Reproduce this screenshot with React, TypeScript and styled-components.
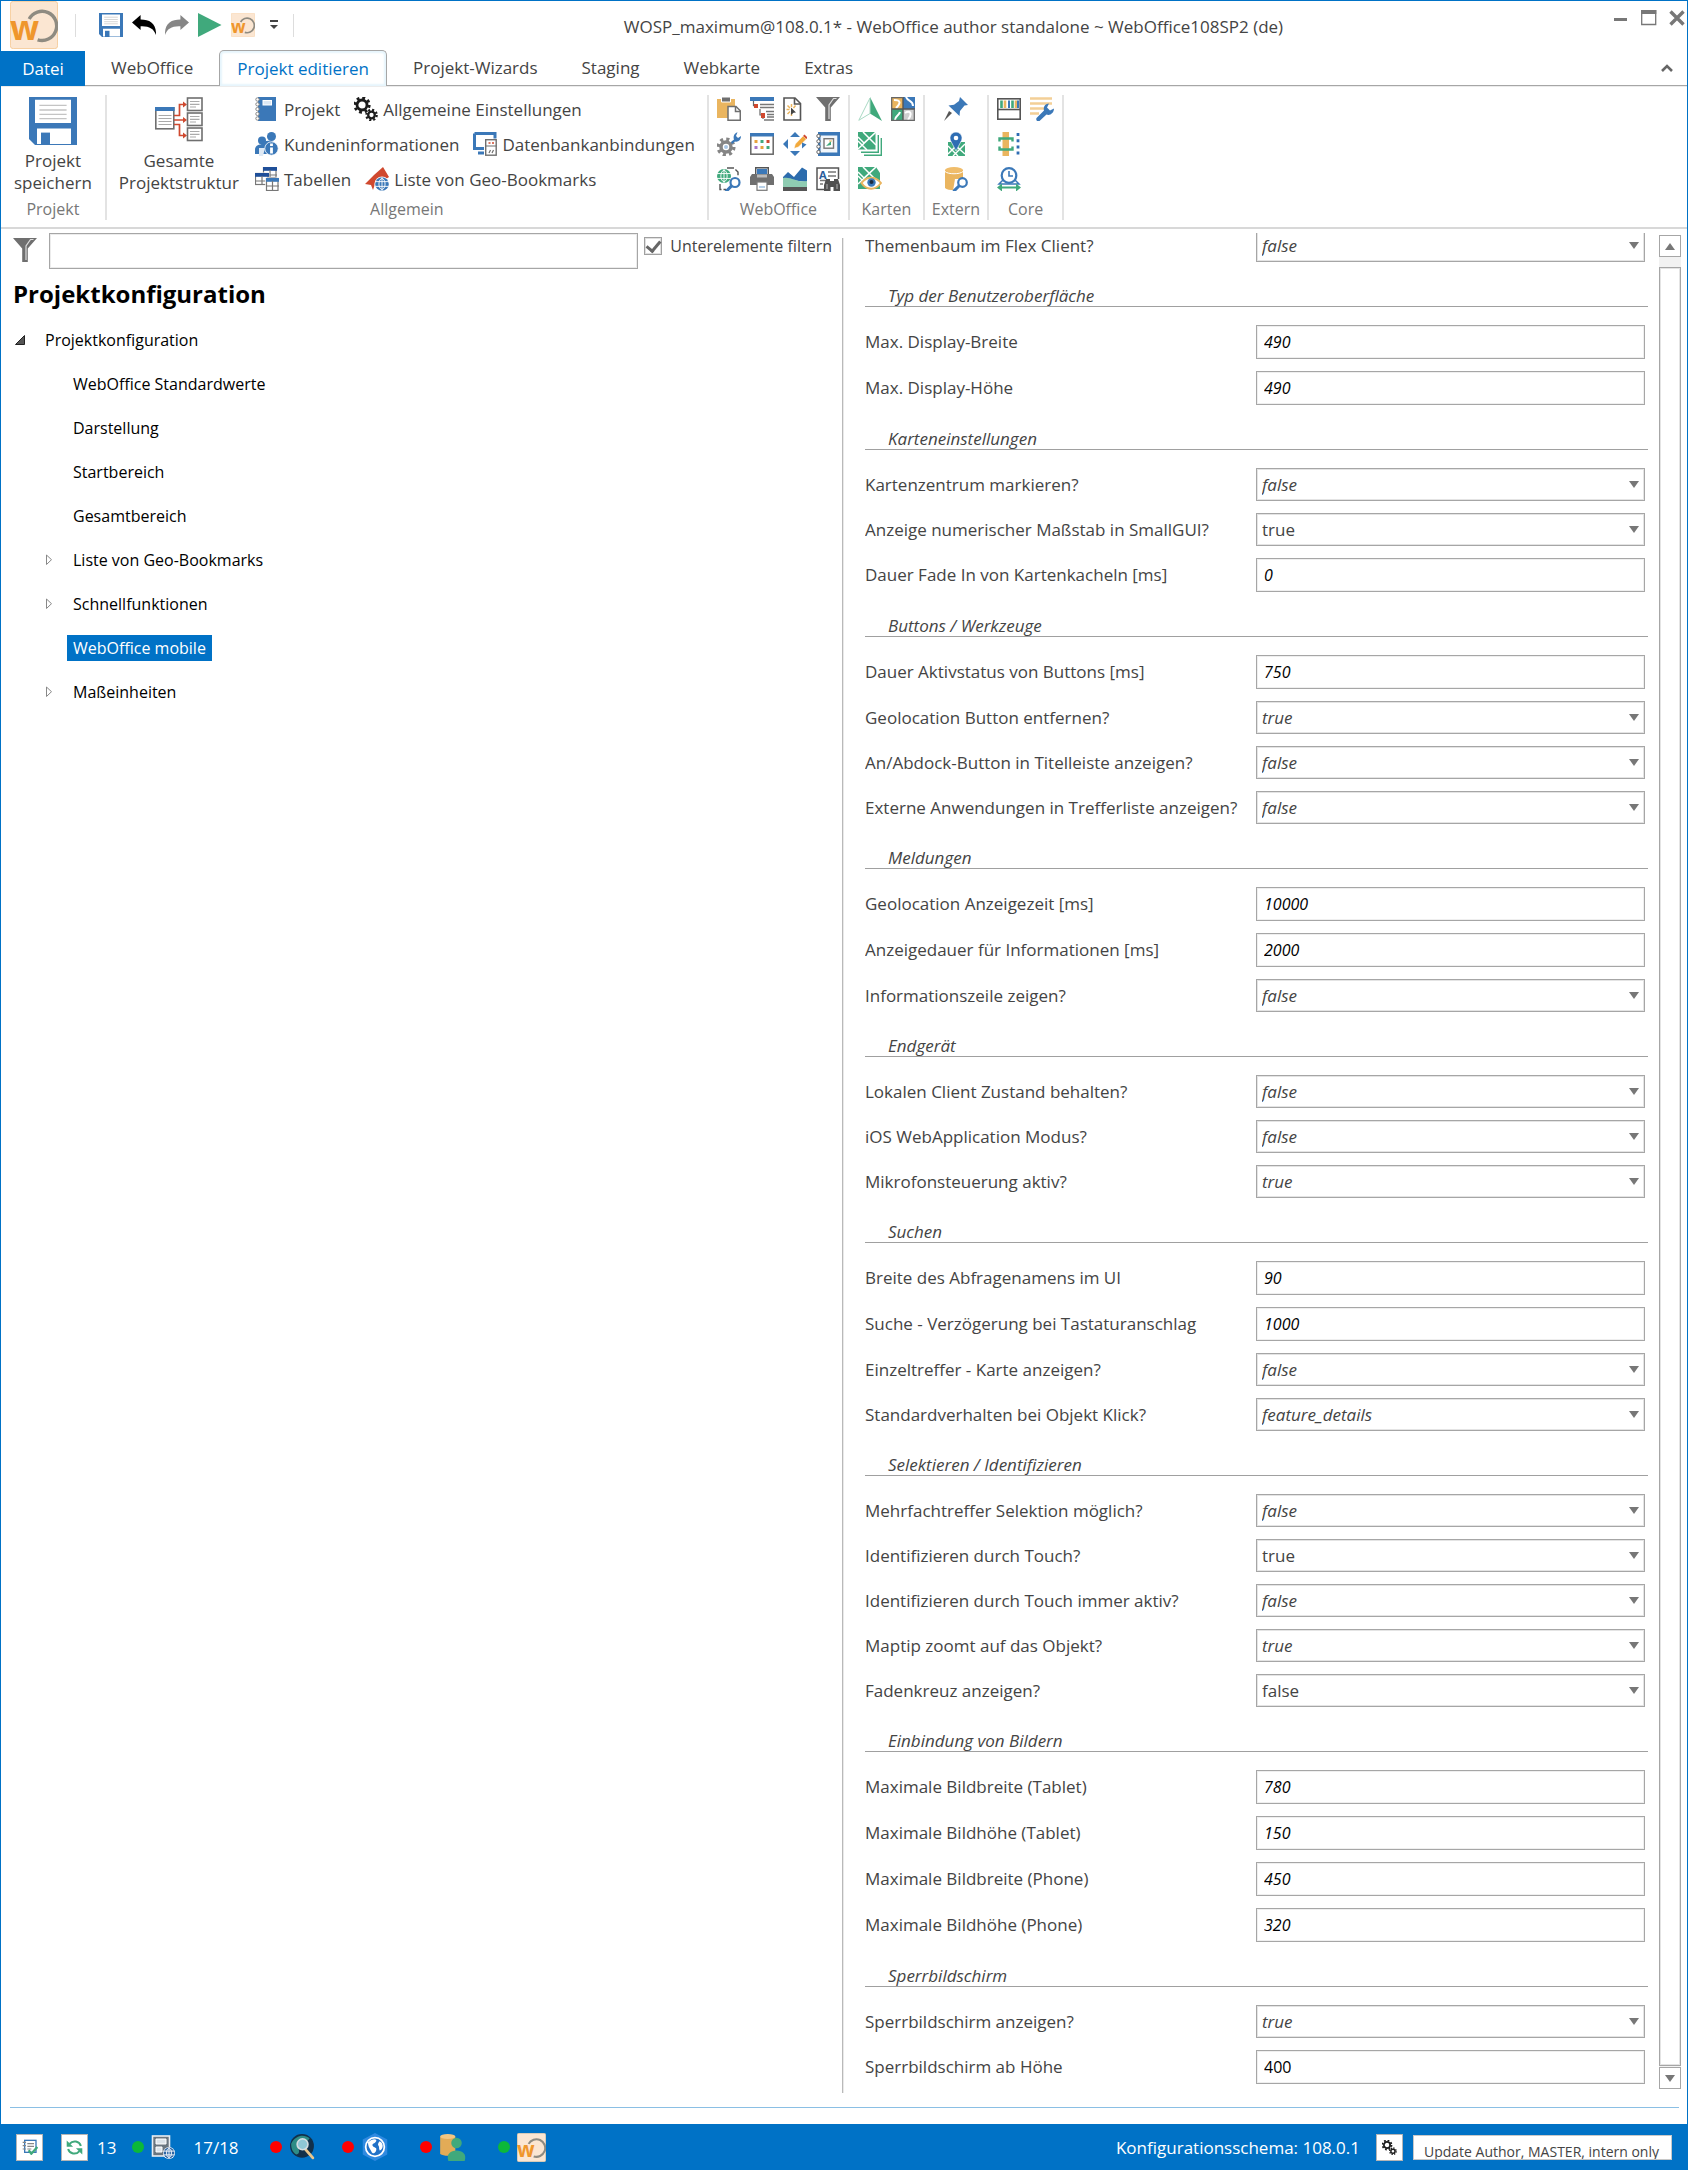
import React, { useState } from 'react';
import styled, { createGlobalStyle, css } from 'styled-components';

const BLUE = '#0072c6';
const IB = '#3b78b8';
const IG = '#6f6f6f';
const GREEN = '#40a97c';
const AMBER = '#eab55f';
const RED = '#d0492f';

const Global = createGlobalStyle`
  * { box-sizing: border-box; }
  body { margin: 0; background: #fff; }
  body, button, input, select {
    font-family: "Open Sans", "Noto Sans", sans-serif;
    font-size: 17px;
    color: #444;
  }
  button { border: 0; padding: 0; background: none; cursor: pointer; }
  svg { display: block; flex: none; }
`;

/* ---------- icons ---------- */

type IconProps = { size?: number };
const Svg = ({ size = 24, children }: IconProps & { children: React.ReactNode }) => (
  <svg width={size} height={size} viewBox="0 0 24 24" fill="none" aria-hidden="true">{children}</svg>
);

const Gear = ({ x, y, r, c, w = 2 }: { x: number; y: number; r: number; c: string; w?: number }) => {
  const tooth = (2 * Math.PI * (r + w * 0.8)) / 16;
  return (
    <>
      <circle cx={x} cy={y} r={r} stroke={c} strokeWidth={w} />
      <circle cx={x} cy={y} r={r + w * 0.8} stroke={c} strokeWidth={w} strokeDasharray={`${tooth} ${tooth}`} />
    </>
  );
};

const Lens = ({ x, y, r = 3.5, c = IB }: { x: number; y: number; r?: number; c?: string }) => (
  <>
    <path d={`M${x - r * 0.7} ${y + r * 0.7}L${x - r * 1.9} ${y + r * 1.9}`} stroke={c} strokeWidth="3" strokeLinecap="round" />
    <circle cx={x} cy={y} r={r} fill="#fff" stroke={c} strokeWidth="2.2" />
  </>
);

const Globe = ({ x, y, r, c }: { x: number; y: number; r: number; c: string }) => (
  <>
    <circle cx={x} cy={y} r={r} fill={c} />
    <ellipse cx={x} cy={y} rx={r * 0.45} ry={r * 0.8} stroke="#fff" strokeWidth=".9" />
    <path d={`M${x - r} ${y - r * 0.35}h${2 * r}M${x - r} ${y + r * 0.35}h${2 * r}M${x} ${y - r}v${2 * r}`} stroke="#fff" strokeWidth=".9" />
  </>
);

const LogoIcon = ({ size }: IconProps) => (
  <Svg size={size}>
    <rect x=".2" y=".2" width="23.6" height="23.6" rx="1.4" fill="#fbe6d2" stroke="#f6cd9d" strokeWidth=".5" />
    <path d="M9.600 9a7.300 7.300 0 1 1 4.200 10.400" stroke="#8f8b81" strokeWidth="1.700" />
    <text x="0" y="19.600" fontFamily="Open Sans, sans-serif" fontWeight="700" fontSize="17" fill="#ef962c">w</text>
  </Svg>
);
const SaveIcon = ({ size }: IconProps) => (
  <Svg size={size}>
    <path d="M0 0h24v24H3l-3-3z" fill={IB} />
    <path d="M3 1.4h18V13H3zM4 15.7h17v7.8H4z" fill="#fff" />
    <path d="M5.2 4.2h13.6M5.2 6.5h13.6M5.2 8.7h13.6M5.2 10.8h13.6" stroke="#c4c4c4" strokeWidth=".7" />
    <path d="M6 17.8h4.5V24H6z" fill={IB} />
  </Svg>
);
const UndoIcon = () => (
  <Svg><path d="M0 9.5 8.6 2v4.5C18 6.500 24.500 10.500 24 22 21.800 15.500 17 12.800 8.600 13.200V17z" fill="#000" /></Svg>
);
const RedoIcon = () => (
  <Svg><path d="M24 9.500 15.400 2v4.500C6 6.500-.5 10.500 0 22 2.200 15.500 7 12.800 15.400 13.200V17z" fill="#868686" /></Svg>
);
const PlayIcon = () => <Svg><path d="M0 0 23.500 12 0 24z" fill={GREEN} /></Svg>;

const StructureIcon = () => (
  <svg width="48" height="48" viewBox="0 0 48 48" fill="none" aria-hidden="true">
    <rect x=".8" y="10.800" width="18" height="21" fill="#fff" stroke={IG} strokeWidth="1.600" />
    <path d="M0 10h19.600v4H0z" fill={IB} />
    <path d="M3.500 18.500h13M3.500 21.500h13M3.500 24.500h13M3.500 27.500h13" stroke="#aaa" strokeWidth="1.200" />
    <path d="M19 18.500h5.500V7.500H30M19 23H30M19 27.500h5.500v11H30" stroke={RED} strokeWidth="1.700" />
    <path d="m28 4.500 4 3-4 3zM28 20l4 3-4 3zM28 35.500l4 3-4 3z" fill={RED} />
    {[1, 16, 31].map((y) => (
      <g key={y}>
        <rect x="32.500" y={y} width="14.500" height="12.500" fill="#fff" stroke={IG} strokeWidth="1.600" />
        <path d={`M35 ${y + 3.500}h9.500M35 ${y + 6.300}h9.500M35 ${y + 9}h6`} stroke="#aaa" strokeWidth="1.200" />
      </g>
    ))}
  </svg>
);
const NotebookIcon = () => (
  <Svg>
    <path d="M3 0h18v24H3z" fill={IB} /><path d="M7.500 3h9.500v5.500H7.500z" fill="#fff" /><path d="M8.500 4h7.500v3.500H8.500z" fill="#dce8f4" />
    {[2.500, 7.300, 12.100, 16.900, 21.500].map((y) => <circle key={y} cx="2.500" cy={y} r="1.700" fill="#fff" stroke="#888" strokeWidth="1" />)}
  </Svg>
);
const GearsIcon = ({ size }: IconProps) => (
  <Svg size={size}><Gear x={8} y={8} r={5} c="#1c1c1c" w={2.800} /><Gear x={17.500} y={18} r={3.300} c="#1c1c1c" w={2.300} /></Svg>
);
const PeopleIcon = () => (
  <Svg>
    <circle cx="16.500" cy="4.500" r="4.500" fill={IB} /><circle cx="7" cy="8.500" r="4" fill={IB} />
    <path d="M0 24v-6c0-4 3-5.500 6-5.500 2-4 12-6 15.500.5V18L11 22H0z" fill={IB} />
    <path d="M4 16v8h4l2-8z" fill="#dfe9f4" />
    <circle cx="16.500" cy="16.500" r="6.700" fill={IB} stroke="#fff" strokeWidth=".8" />
    <path d="M16.500 11.500v2.600M16.500 15.500v6" stroke="#fff" strokeWidth="2.800" />
  </Svg>
);
const TablesIcon = () => (
  <Svg>
    {[[8, 0, 14, 11], [0, 6, 14, 12], [11, 11, 13, 13]].map(([x, y, w, h], i) => (
      <g key={i}>
        <rect x={x - 0.800} y={y - 0.500} width={w + 1} height={h + 1} fill="#fff" />
        <rect x={x + 0.500} y={y + 0.500} width={w - 1.500} height={h - 1} stroke="#777" strokeWidth="1.200" />
        <path d={`M${x} ${y}h${w}v3.800h-${w}z`} fill={i === 2 ? IB : '#1f4f99'} />
        <path d={`M${x + w / 2} ${y + 3}v${h - 3}M${x} ${y + 8}h${w}`} stroke="#777" strokeWidth="1.200" />
      </g>
    ))}
  </Svg>
);
const DatabaseConnIcon = () => (
  <Svg>
    <path d="M1.500 1.500h20.500v5M11 16.500H1.500v-15M5 21h6" stroke={IB} strokeWidth="3" />
    <rect x="12.700" y="7.700" width="10.500" height="15.500" fill="#fff" stroke={IG} strokeWidth="1.400" />
    <path d="M12.500 14h11M16 21l1.500-3M19 21l1.500-3" stroke={IG} strokeWidth="1.200" />
    <path d="M15.500 11h2M19 11h2" stroke={RED} strokeWidth="1.300" />
  </Svg>
);
const GeoBookmarkIcon = () => (
  <Svg>
    <path d="M18 0 24 10 18 14 11 14 8 23 6 18 0 17 9 8z" fill={RED} />
    <circle cx="17" cy="17" r="7.600" fill="#fff" /><Globe x={17} y={17} r={6.800} c={IB} />
  </Svg>
);
const PasteIcon = () => (
  <Svg>
    <path d="M0 2h18v19H0z" fill={AMBER} /><path d="M4.500 0h9v5h-9z" fill={IG} stroke="#fff" />
    <path d="M11 9.500h8l4.300 4.300v9.500H11z" fill="#fff" stroke={IG} strokeWidth="1.500" /><path d="M18.500 9.500v5h5" stroke={IG} strokeWidth="1.500" />
  </Svg>
);
const TreeIcon = () => (
  <Svg>
    <path d="M0 0h24v4H0z" fill={IB} /><path d="M3.500 4v5M3.500 9H7M10 12v6h3M13 18v4" stroke="#666" strokeWidth="1.200" />
    <path d="M4 7h4v4H4zM11 16h4v5h-4z" fill={RED} />
    <path d="M10 7.500h14M10 10.500h14M16 14.500h8M17 17.500h7M17 20h7M14 23h10" stroke="#777" strokeWidth="1.500" />
  </Svg>
);
const PageClickIcon = () => (
  <Svg>
    <path d="M1 1h11l5.500 5.500V23H1z" stroke="#555" strokeWidth="1.600" /><path d="M11.500 1v6h6" stroke="#555" strokeWidth="1.600" />
    <path d="M8.500 7v3M8.500 16v3M3.500 12.500h3M4.500 8.500l2.500 2.500M4.500 17l2.500-2.500M12.500 8.500 10.500 11" stroke={AMBER} strokeWidth="1.500" />
    <path d="M8 10.500l5 5-2.500.3L8 18z" fill="#444" />
  </Svg>
);
const FunnelIcon = () => (
  <Svg>
    <path d="M0 0h24L14.800 10.500V24H9.200V10.500z" fill={IG} /><path d="M20.500 1.500h-3L13 8v14" stroke="#ddd" strokeWidth="1.200" />
  </Svg>
);
const GearWrenchIcon = () => (
  <Svg>
    <Gear x={9} y={15} r={5} c="#858585" w={3.500} /><circle cx="9" cy="15" r="2" fill="#a9c6e4" />
    <path d="M14 10l3-2.500c-1-3 0-6 3.500-7.300L19 4l2 2 3-2c0 4-3 6.500-6 5.500L15 12z" fill={IB} />
  </Svg>
);
const CalendarIcon = () => (
  <Svg>
    <rect x=".8" y="1.800" width="22.400" height="20.400" stroke="#666" strokeWidth="1.500" /><path d="M0 1h24v3.500H0z" fill={IB} />
    <path d="M4.500 9.500h3" stroke="#e8a33d" strokeWidth="3" /><path d="M4.500 15.500h3" stroke="#a977c9" strokeWidth="3" />
    <path d="M10.500 9.500h3" stroke={GREEN} strokeWidth="3" /><path d="M10.500 15.500h3" stroke="#e8a33d" strokeWidth="3" />
    <path d="M16.500 9.500h3" stroke={RED} strokeWidth="3" /><path d="M16.500 15.500h3" stroke={GREEN} strokeWidth="3" />
  </Svg>
);
const MoveEditIcon = () => (
  <Svg>
    <path d="M12 0l5 5H7zM12 24l5-5H7zM0 12l5-5v10z" fill={IB} />
    <path d="M11 16.500l1.300-4.500 7.700-8 3.500 3-8 8z" fill="#f2a93b" stroke="#fff" strokeWidth=".6" /><path d="M20 4l1.500-1.500 3 3L23.500 7z" fill={RED} />
    <path d="M19 10.500l4.500 2-4.500 4z" fill={IB} />
  </Svg>
);
const AlbumIcon = () => (
  <Svg>
    <path d="M2 0h22v24H2z" fill={IB} /><path d="M4.500 3.500h16.800v17H4.500z" fill="#f1f6fb" />
    <rect x="8" y="6.700" width="9.500" height="9.500" fill="#fff" stroke="#777" strokeWidth="1.400" /><path d="M10 14l5-5v4z" fill={GREEN} /><path d="M13 9h3" stroke={AMBER} />
    {[4, 9.300, 14.600, 20].map((y) => <circle key={y} cx="2.500" cy={y} r="1.700" fill="#fff" stroke="#666" strokeWidth="1" />)}
  </Svg>
);
const WebSearchIcon = () => (
  <Svg>
    <path d="M10 1h7l4 4v5M3 17v5.500h6" stroke="#555" strokeWidth="1.400" strokeDasharray="7 2" />
    <Globe x={7} y={9} r={7} c={GREEN} /><Lens x={18} y={15.500} r={4.500} />
  </Svg>
);
const PrinterIcon = () => (
  <Svg>
    <path d="M5.700.7h12.600V8H5.700z" fill="#e8f0f8" stroke="#555" strokeWidth="1.400" /><path d="M7 2h10v5H7z" fill={IB} />
    <path d="M2 7h20l2 3v8H0v-8z" fill={IG} /><rect x="7" y="15" width="10" height="8.300" fill="#fff" stroke="#777" strokeWidth="1.200" />
    <path d="M9 20h6" stroke="#9fc0e0" strokeWidth="1.500" /><path d="M7 7.500h10v3H7z" fill="#bbb" />
  </Svg>
);
const LandscapeIcon = () => (
  <Svg>
    <path d="M0 10l5-5 6 5 8-9.500 5 3V15L0 12z" fill="#2c6cad" /><path d="M0 11c8-2 14 5 24 3v6H0z" fill="#8fccb2" /><path d="M0 20h24v4H0z" fill="#555" />
  </Svg>
);
const TextSearchIcon = () => (
  <Svg>
    <path d="M8 22.500H1V1h21.500v11" stroke="#555" strokeWidth="1.500" />
    <text x="3" y="11.500" fontFamily="Open Sans, sans-serif" fontWeight="700" fontSize="11" fill="#2a5d9c">A</text>
    <path d="M12 5h8M12 9h8M4 13.500h6M4 17h3" stroke="#777" strokeWidth="1.400" />
    <path d="M10 12h4v2h4v-2h4l2 6v6h-6.500v-4h-3v4H8v-6z" fill="#505050" /><path d="M11 17v5M21 17v5" stroke="#ccc" strokeWidth=".8" />
  </Svg>
);
const NorthIcon = () => (
  <Svg><path d="M12 0l12 24-12-7.500z" fill={GREEN} /><path d="M12 1 .8 23.300 12 16.500z" stroke="#a8d9c3" strokeWidth="1" /></Svg>
);
const MapGridIcon = () => (
  <Svg>
    <path d="M0 0h12v12H0z" fill={AMBER} /><path d="M12 0h12v12H12z" fill={IB} /><path d="M0 12h12v12H0z" fill={GREEN} /><path d="M12 12h12v12H12z" fill="#cfcfcf" />
    <path d="M3 3c7 0 7 3 2 8M15 0c2 5 7 3 7 9M4 23c0-4 4-4 5-8M14 16c5-3 8 0 3 7" stroke="#fff" strokeWidth="2" />
    <path d="M12 0v24M0 12h24" stroke="#555" strokeWidth="1.400" /><path d="M.7 12V.7h11M.7 12v11.300h22.600V12" stroke="#666" strokeWidth="1.200" />
  </Svg>
);
const mapLines = 'M0 5l6 6 12-11M0 17L17 1M5 0l13 13M0 9l9 9';
const MapStackIcon = () => (
  <Svg>
    <path d="M0 0h17.500v17.500H0z" fill={GREEN} /><path d={mapLines} stroke="#fff" strokeWidth="1.500" />
    <path d="M3 20.300h17.300V3M6 23.300h17.300V6" stroke={GREEN} strokeWidth="1.400" />
  </Svg>
);
const MapEyeIcon = () => (
  <Svg>
    <path d="M0 0h18l4 6v16H0z" fill={GREEN} /><path d="M0 5l6 6 12-11M0 17L17 1M5 0l17 17M0 9l12 12" stroke="#fff" strokeWidth="1.500" />
    <path d="M3.500 16c5-7 14-7 19.500 0-5.500 7.500-14.500 7.500-19.500 0z" fill="#fff" stroke={AMBER} strokeWidth="2" />
    <circle cx="13.500" cy="15.500" r="4.200" fill={IB} /><circle cx="13.500" cy="15" r="2" fill="#1d2b3f" />
  </Svg>
);
const PinIcon = () => (
  <Svg>
    <path d="M8 16 0 24l5-10z" fill="#555" /><path d="M16 0l8 8-3.500.5L16 14l-.5 5L4.500 8.500l5.500-.7L15 4z" fill={IB} />
  </Svg>
);
const MapPinIcon = () => (
  <Svg>
    <path d="M4 10h17v14H4z" fill={GREEN} /><path d="M4 14l10 10M21 12 9 24M4 22l8-8 9 8" stroke="#fff" strokeWidth="1.400" />
    <path d="M12 19 6.500 8.500a6 6 0 1 1 11 0z" fill="#2e6db3" stroke="#fff" strokeWidth=".6" /><circle cx="12" cy="6" r="2.300" fill="#fff" />
  </Svg>
);
const DbSearchIcon = () => (
  <Svg>
    <path d="M1 3h18v18c-3 3-15 3-18 0z" fill={AMBER} /><ellipse cx="10" cy="3" rx="9" ry="3" fill="#f0bd6b" /><path d="M1 4.500c3 3 15 3 18 0" stroke="#fff" strokeWidth="1" />
    <path d="M11 12h12v12H9z" fill="#fff" /><Lens x={18.500} y={15.500} r={4.300} />
  </Svg>
);
const ShelfIcon = () => (
  <Svg>
    <rect x=".8" y="1.800" width="22.400" height="20.400" stroke="#555" strokeWidth="1.600" /><path d="M0 12.500h24" stroke="#555" strokeWidth="1.600" />
    <path d="M4.500 3.500v7.500M15.500 3.500v7.500" stroke={GREEN} strokeWidth="2.600" /><path d="M8 3.500v7.500M19 3.500v7.500" stroke={AMBER} strokeWidth="2.600" /><path d="M12 3.500v7.500M21 3.500v7.500" stroke={IB} strokeWidth="2" />
  </Svg>
);
const ListWrenchIcon = () => (
  <Svg>
    <path d="M0 1.500h22M0 6.500h22M0 11.500h16M0 16.500h9" stroke="#f3cf97" strokeWidth="2.600" />
    <path d="M6.500 21l7.500-7.500c-1-4 1-6.500 5-7l-2 4 3 3 4-2c0 4.500-4 7.500-7.500 6L9.500 24c-2 1-4-.5-3-3z" fill={IB} />
  </Svg>
);
const BracketsIcon = () => (
  <Svg>
    <path d="M5.500 0h6.500v24H5.500z" fill={AMBER} />
    <path d="M2.500 9.500V6.500h13v3M2.500 14.500v3h13v-3" stroke={GREEN} strokeWidth="2.400" />
    <path d="M21 1v22" stroke="#2e6db3" strokeWidth="2.800" strokeDasharray="3 3.200" />
  </Svg>
);
const TimeExtentIcon = () => (
  <Svg>
    <path d="M6 13l-4 4h20l-4-4" stroke={IB} strokeWidth="1.500" /><circle cx="12" cy="8.500" r="7.300" fill="#fff" stroke={IB} strokeWidth="2.200" /><path d="M12 4v5h4" stroke={IB} strokeWidth="1.600" />
    <path d="M0 20.500l5-4v3h14v-3l5 4-5 4v-3H5v3z" fill={GREEN} />
  </Svg>
);
const ChecklistIcon = () => (
  <Svg size={16}>
    <rect x="4" y="2" width="17" height="18" stroke={IB} strokeWidth="2" /><path d="M1 5h5M1 10h5M1 15h5M8 7h10M8 11h10M8 15h6" stroke="#888" strokeWidth="1.700" />
    <path d="M10 17l4 5 9-10" stroke={GREEN} strokeWidth="3.500" />
  </Svg>
);
const RefreshIcon = () => (
  <Svg size={17}>
    <path d="M21 10C19 3 10 1 5 7M3 14c2 7 11 9 16 3" stroke={GREEN} strokeWidth="2.800" /><path d="M1 2v9h9zM23 22v-9h-9z" fill={GREEN} />
  </Svg>
);
const ServerIcon = () => (
  <Svg>
    <rect x="1.500" y="1" width="17" height="20" fill="#6a7680" stroke="#e9eef2" strokeWidth="1.600" /><path d="M5 4h10v5H5zM5 12h6v5H5z" fill="#dce4ea" stroke="#fff" />
    <circle cx="18" cy="18" r="6" fill="#fff" /><Globe x={18} y={18} r={5.400} c="#2b65a5" />
  </Svg>
);
const GlobeSearchIcon = () => (
  <Svg size={26}>
    <circle cx="12" cy="11" r="11" fill="#12304a" /><path d="M2 9c4-8 12-9 17-5-3 5-6 2-9 6s2 7-3 9C3 17 2 13 2 9z" fill="#2e8c86" />
    <path d="M15 14l7 8" stroke="#e8c68c" strokeWidth="2.600" strokeLinecap="round" /><circle cx="12.500" cy="9.500" r="5" fill="#8fc7d6" stroke="#d4dde2" strokeWidth="1.500" />
  </Svg>
);
const HexGlobeIcon = () => (
  <Svg size={28}>
    <path d="M12 0l10.500 5.500v13L12 24 1.500 18.500v-13z" fill="#2f8ae0" /><circle cx="12" cy="12" r="8" fill="#2272c8" stroke="#fff" strokeWidth="1.500" />
    <path d="M6 8c4-4 8-3 7-1s-4 2-3 4 4 1 3 4-3 3-4 1-3-4-3-8zM16 7c4 2 3 7 0 8-1-2 0-3-1-4s0-3 1-4z" fill="#fff" />
  </Svg>
);
const DbUserIcon = () => (
  <Svg size={28}>
    <path d="M1 3h13v15c-3 2-10 2-13 0z" fill="#e2ab57" /><ellipse cx="7.500" cy="3" rx="6.500" ry="2.200" fill="#f2c681" />
    <circle cx="15" cy="8.500" r="4.500" fill={GREEN} /><path d="M8 24c-2-6 2-9 7-9s9 3 7 9z" fill={GREEN} />
  </Svg>
);

/* ---------- window chrome ---------- */

const Window = styled.div`
  display: flex;
  flex-direction: column;
  min-height: 100vh;
  border: 1px solid ${BLUE};
  border-bottom: 0;
`;
const TitleBar = styled.header`
  display: flex;
  align-items: flex-start;
  height: 49px;
  padding-left: 9px;
`;
const QuickBar = styled.div`
  display: flex;
  align-items: center;
  gap: 9px;
  padding-top: 12px;
`;
const ToolButton = styled.button<{ $narrow?: boolean }>`
  display: grid;
  place-items: center;
  height: 24px;
  width: ${(p) => (p.$narrow ? 20 : 24)}px;
`;
const BarRule = styled.span<{ $before?: number; $after?: number }>`
  width: 1px;
  height: 23px;
  margin: 0 ${(p) => p.$after ?? 0}px 0 ${(p) => p.$before ?? 0}px;
  background: #ddd;
`;
const WindowTitle = styled.h1`
  flex: 1;
  margin: 0;
  padding-top: 14px;
  text-align: center;
  font-size: 17px;
  font-weight: 400;
  line-height: 24px;
`;
const WindowButtons = styled.div`
  display: flex;
  gap: 12px;
  padding: 9px 2px 0 0;
`;
const WindowButton = styled.button`
  width: 16px;
  height: 16px;
`;

const TabRow = styled.nav`
  display: flex;
  align-items: stretch;
  height: 36px;
  border-bottom: 1px solid #a6a6a6;
  box-shadow: 0 1px 0 #ececec;
`;
const FileTab = styled.button`
  width: 84px;
  margin: 1px 4px -1px 0;
  background: ${BLUE};
  color: #fff;
`;
const Tab = styled.button<{ $active?: boolean }>`
  margin: 0 4px;
  padding: 0 17px;
  border: 1px solid transparent;
  ${(p) =>
    p.$active &&
    css`
      margin-bottom: -1px;
      border-color: #a6a6a6;
      border-bottom: 0;
      border-radius: 5px 5px 0 0;
      background: #fff;
      box-shadow: inset 0 0 2px 2px #e6f5fc;
      color: ${BLUE};
    `}
`;
const Collapse = styled.button`
  margin-left: auto;
  padding: 0 14px;
`;

/* ---------- ribbon ---------- */

const Ribbon = styled.div`
  display: flex;
  height: 143px;
  padding: 9px 0 7px;
  border-bottom: 2px solid #d8d8d8;
`;
const Group = styled.section<{ $pad: number }>`
  display: flex;
  flex-direction: column;
  align-items: center;
  padding: 2px ${(p) => p.$pad}px 0;
  border-right: 2px solid #e3e3e3;
`;
const GroupBody = styled.div`
  display: flex;
  height: 104px;
  gap: 16px;
`;
const GroupLabel = styled.h2`
  margin: 0;
  font-size: 16px;
  font-weight: 400;
  line-height: 22px;
  color: #777;
`;
const LargeButton = styled.button`
  display: flex;
  flex-direction: column;
  align-items: center;
  align-self: flex-start;
  gap: 5px;
  line-height: 22px;
  white-space: pre-line;
`;
const ButtonRows = styled.div`
  display: flex;
  flex-direction: column;
  gap: 11px;
`;
const ButtonRow = styled.div`
  display: flex;
  gap: 14px;
`;
const SmallButton = styled.button`
  display: flex;
  align-items: center;
  gap: 5px;
  height: 24px;
  white-space: nowrap;
`;
const IconGrid = styled.div<{ $cols: number }>`
  display: grid;
  grid-template-columns: repeat(${(p) => p.$cols}, 24px);
  grid-auto-rows: 24px;
  gap: 11px 9px;
`;
const IconCell = styled.button<{ $rowStart?: boolean }>`
  ${(p) => p.$rowStart && 'grid-column: 1;'}
`;

/* ---------- body ---------- */

const Body = styled.main`
  display: grid;
  grid-template-columns: calc(50% - 2px) 2px minmax(0, 1fr);
  flex: 1;
  padding: 4px 0 14px;
`;
const Splitter = styled.div`
  margin-top: 5px;
  background: #b9b9b9;
  border-right: 1px solid #e9e9e9;
`;
const TreePane = styled.aside`
  padding: 0 10px 0 12px;
`;
const FilterRow = styled.form`
  display: flex;
  align-items: flex-start;
`;
const FilterButton = styled.button`
  margin: 5px 12px 0 0;
`;
const FilterInput = styled.input`
  flex: 1;
  min-width: 0;
  height: 36px;
  padding: 0 8px;
  border: 1px solid #a6a6a6;
  outline: 1px solid #ececec;
  outline-offset: -2px;
`;
const CheckLabel = styled.label`
  display: flex;
  align-items: center;
  gap: 8px;
  height: 26px;
  padding-left: 6px;
  font-size: 16px;
`;
const CheckBox = styled.input`
  appearance: none;
  display: grid;
  place-items: center;
  width: 18px;
  height: 18px;
  margin: 0;
  border: 1px solid #a0a0a0;
  box-shadow: inset 0 0 0 1px #e0e0e0;
  &:checked::after {
    content: '';
    width: 6px;
    height: 11px;
    margin-bottom: 2px;
    border: solid #666;
    border-width: 0 3px 3px 0;
    transform: rotate(40deg);
  }
`;
const PaneTitle = styled.h2`
  margin: 8px 0 7px;
  font-size: 24px;
  font-weight: 700;
  line-height: 34px;
  color: #000;
`;
const TreeList = styled.ul`
  margin: 0;
  padding: 0;
  list-style: none;
`;
const TreeItem = styled.li<{ $level: number }>`
  display: flex;
  align-items: center;
  height: 44px;
  padding-left: ${(p) => p.$level * 28}px;
`;
const Twisty = styled.span`
  display: flex;
  width: 26px;
  padding-left: 2px;
`;
const TreeNode = styled.button<{ $selected?: boolean }>`
  height: 26px;
  padding: 0 6px;
  font-size: 16px;
  line-height: 26px;
  background: ${(p) => (p.$selected ? BLUE : 'transparent')};
  color: ${(p) => (p.$selected ? '#fff' : '#000')};
`;

const FormPane = styled.section`
  display: flex;
  gap: 11px;
  min-width: 0;
  padding: 0 6px 0 21px;
`;
const Fields = styled.div`
  display: flex;
  flex: 1;
  flex-direction: column;
  gap: 12px;
  min-width: 0;
  overflow: hidden;
  padding-bottom: 9px;
`;
const Field = styled.div`
  display: grid;
  grid-template-columns: calc(50% + 1px) minmax(0, 1fr);
  align-items: center;
  padding-right: 3px;
  &:first-child { margin-top: -4px; }
`;
const FieldLabel = styled.label`
  font-size: 17px;
  line-height: 24px;
  white-space: nowrap;
`;
const SectionTitle = styled.h3`
  height: 33px;
  margin: 0 0 6px;
  padding: 10px 0 0 23px;
  border-bottom: 1px solid #a0a0a0;
  font-size: 17px;
  font-weight: 400;
  font-style: italic;
  line-height: 24px;
`;
const TextBox = styled.input<{ $italic: boolean }>`
  width: 100%;
  height: 34px;
  padding: 0 7px;
  border: 1px solid #a6a6a6;
  box-shadow: inset 0 0 0 1px #efefef;
  font-size: 16px;
  font-style: ${(p) => (p.$italic ? 'italic' : 'normal')};
  color: #000;
`;
const SelectWrap = styled.span`
  position: relative;
  display: block;
  svg { position: absolute; top: 13px; right: 6px; pointer-events: none; }
`;
const Select = styled.select<{ $italic: boolean }>`
  appearance: none;
  display: block;
  width: 100%;
  height: 33px;
  padding: 0 20px 0 5px;
  border: 1px solid #a6a6a6;
  border-radius: 0;
  box-shadow: inset 0 0 0 1px #e4e4e4;
  background: #fff;
  font-size: 17px;
  font-style: ${(p) => (p.$italic ? 'italic' : 'normal')};
`;
const ScrollBar = styled.div`
  display: flex;
  flex-direction: column;
  width: 22px;
  margin: 2px 0 4px;
  background: #f2f2f2;
`;
const ScrollButton = styled.button`
  display: grid;
  place-items: center;
  height: 22px;
  border: 1px solid #a6a6a6;
  background: #fff;
`;
const Thumb = styled.div`
  flex: 1;
  margin: 10px 0 1px;
  border: 1px solid #a6a6a6;
  box-shadow: inset 0 0 0 1px #e4e4e4;
  background: #fff;
`;
const FootRule = styled.hr`
  width: calc(100% - 17px);
  margin: 0 auto 16px;
  border: 0;
  border-top: 1px solid #8abfe4;
`;

/* ---------- status bar ---------- */

const StatusBar = styled.footer`
  display: flex;
  align-items: center;
  height: 46px;
  padding: 0 15px;
  background: ${BLUE};
  color: #fff;
`;
const StatusButton = styled.button<{ $gap?: number }>`
  display: grid;
  place-items: center;
  width: 27px;
  height: 27px;
  margin-right: ${(p) => p.$gap ?? 0}px;
  border: 1px solid #b5b5b5;
  background: #fff;
`;
const StatusItem = styled.span<{ $gap: number }>`
  display: flex;
  align-items: center;
  gap: 7px;
  margin-right: ${(p) => p.$gap}px;
`;
const Dot = styled.i<{ $on?: boolean }>`
  width: 12px;
  height: 12px;
  border-radius: 50%;
  background: ${(p) => (p.$on ? '#0cb83a' : '#f00')};
`;
const Count = styled.span<{ $gap: number }>`
  margin-right: ${(p) => p.$gap}px;
`;
const Schema = styled.span`
  margin: 0 16px 0 auto;
`;
const Notice = styled.div`
  width: 259px;
  height: 25px;
  overflow: hidden;
  padding: 4px 0 0 10px;
  border: 1px solid #c8c8c8;
  background: #fff;
  color: #444;
  font-size: 14px;
  line-height: 24px;
  white-space: nowrap;
`;

/* ---------- data ---------- */

type Kind = 'text' | 'select';
type Row = [label: string, value: string, kind: Kind, plain?: boolean];

const sections: { title?: string; rows: Row[] }[] = [
  { rows: [['Themenbaum im Flex Client?', 'false', 'select']] },
  { title: 'Typ der Benutzeroberfläche', rows: [['Max. Display-Breite', '490', 'text'], ['Max. Display-Höhe', '490', 'text']] },
  {
    title: 'Karteneinstellungen',
    rows: [
      ['Kartenzentrum markieren?', 'false', 'select'],
      ['Anzeige numerischer Maßstab in SmallGUI?', 'true', 'select', true],
      ['Dauer Fade In von Kartenkacheln [ms]', '0', 'text'],
    ],
  },
  {
    title: 'Buttons / Werkzeuge',
    rows: [
      ['Dauer Aktivstatus von Buttons [ms]', '750', 'text'],
      ['Geolocation Button entfernen?', 'true', 'select'],
      ['An/Abdock-Button in Titelleiste anzeigen?', 'false', 'select'],
      ['Externe Anwendungen in Trefferliste anzeigen?', 'false', 'select'],
    ],
  },
  {
    title: 'Meldungen',
    rows: [
      ['Geolocation Anzeigezeit [ms]', '10000', 'text'],
      ['Anzeigedauer für Informationen [ms]', '2000', 'text'],
      ['Informationszeile zeigen?', 'false', 'select'],
    ],
  },
  {
    title: 'Endgerät',
    rows: [
      ['Lokalen Client Zustand behalten?', 'false', 'select'],
      ['iOS WebApplication Modus?', 'false', 'select'],
      ['Mikrofonsteuerung aktiv?', 'true', 'select'],
    ],
  },
  {
    title: 'Suchen',
    rows: [
      ['Breite des Abfragenamens im UI', '90', 'text'],
      ['Suche - Verzögerung bei Tastaturanschlag', '1000', 'text'],
      ['Einzeltreffer - Karte anzeigen?', 'false', 'select'],
      ['Standardverhalten bei Objekt Klick?', 'feature_details', 'select'],
    ],
  },
  {
    title: 'Selektieren / Identifizieren',
    rows: [
      ['Mehrfachtreffer Selektion möglich?', 'false', 'select'],
      ['Identifizieren durch Touch?', 'true', 'select', true],
      ['Identifizieren durch Touch immer aktiv?', 'false', 'select'],
      ['Maptip zoomt auf das Objekt?', 'true', 'select'],
      ['Fadenkreuz anzeigen?', 'false', 'select', true],
    ],
  },
  {
    title: 'Einbindung von Bildern',
    rows: [
      ['Maximale Bildbreite (Tablet)', '780', 'text'],
      ['Maximale Bildhöhe (Tablet)', '150', 'text'],
      ['Maximale Bildbreite (Phone)', '450', 'text'],
      ['Maximale Bildhöhe (Phone)', '320', 'text'],
    ],
  },
  { title: 'Sperrbildschirm', rows: [['Sperrbildschirm anzeigen?', 'true', 'select'], ['Sperrbildschirm ab Höhe', '400', 'text', true]] },
];

const tree = [
  { name: 'Projektkonfiguration', level: 0, state: 'open' },
  { name: 'WebOffice Standardwerte', level: 1 },
  { name: 'Darstellung', level: 1 },
  { name: 'Startbereich', level: 1 },
  { name: 'Gesamtbereich', level: 1 },
  { name: 'Liste von Geo-Bookmarks', level: 1, state: 'closed' },
  { name: 'Schnellfunktionen', level: 1, state: 'closed' },
  { name: 'WebOffice mobile', level: 1 },
  { name: 'Maßeinheiten', level: 1, state: 'closed' },
];

const Triangle = ({ up }: { up?: boolean }) => (
  <svg width="10" height="7" viewBox="0 0 10 7" aria-hidden="true"><path d={up ? 'M0 7h10L5 0z' : 'M0 0h10L5 7z'} fill="#777" /></svg>
);

function SettingField({ row: [label, value, kind, plain], id }: { row: Row; id: string }) {
  const options = value === 'feature_details' ? [value] : ['true', 'false'];
  return (
    <Field>
      <FieldLabel htmlFor={id}>{label}</FieldLabel>
      {kind === 'text' ? (
        <TextBox id={id} type="text" defaultValue={value} $italic={!plain} />
      ) : (
        <SelectWrap>
          <Select id={id} defaultValue={value} $italic={!plain}>
            {options.map((o) => <option key={o}>{o}</option>)}
          </Select>
          <Triangle />
        </SelectWrap>
      )}
    </Field>
  );
}

const webOfficeTools: [string, () => React.ReactElement][] = [
  ['Einfügen', PasteIcon], ['Struktur', TreeIcon], ['Startseite', PageClickIcon], ['Filter', FunnelIcon],
  ['Werkzeuge', GearWrenchIcon], ['Kalender', CalendarIcon], ['Editieren', MoveEditIcon], ['Album', AlbumIcon],
  ['Websuche', WebSearchIcon], ['Drucken', PrinterIcon], ['Landschaft', LandscapeIcon], ['Textsuche', TextSearchIcon],
];

const IconButton = ({ name, icon: Icon, rowStart }: { name: string; icon: () => React.ReactElement; rowStart?: boolean }) => (
  <IconCell type="button" aria-label={name} $rowStart={rowStart}><Icon /></IconCell>
);

export default function App() {
  const [selected, setSelected] = useState('WebOffice mobile');
  return (
    <Window>
      <Global />
      <TitleBar>
        <LogoIcon size={48} />
        <QuickBar>
          <BarRule $before={17} $after={14} />
          <ToolButton aria-label="Speichern"><SaveIcon /></ToolButton>
          <ToolButton aria-label="Rückgängig"><UndoIcon /></ToolButton>
          <ToolButton aria-label="Wiederholen"><RedoIcon /></ToolButton>
          <ToolButton aria-label="Starten"><PlayIcon /></ToolButton>
          <ToolButton aria-label="WebOffice"><LogoIcon /></ToolButton>
          <ToolButton aria-label="Anpassen" $narrow>
            <svg width="8" height="10" viewBox="0 0 8 10"><path d="M0 0h8v2H0zM0 5h8L4 9z" fill="#444" /></svg>
          </ToolButton>
          <BarRule />
        </QuickBar>
        <WindowTitle>WOSP_maximum@108.0.1* - WebOffice author standalone ~ WebOffice108SP2 (de)</WindowTitle>
        <WindowButtons>
          <WindowButton aria-label="Minimieren">
            <svg width="16" height="16" viewBox="0 0 16 16"><path d="M1 8h13v3H1z" fill="#777" /></svg>
          </WindowButton>
          <WindowButton aria-label="Maximieren">
            <svg width="16" height="16" viewBox="0 0 16 16"><path d="M.7.5h14v14H.7z" fill="none" stroke="#777" strokeWidth="1.300" /><path d="M0 0h15.300v4H0z" fill="#777" /></svg>
          </WindowButton>
          <WindowButton aria-label="Schließen">
            <svg width="16" height="16" viewBox="0 0 16 16"><path d="M1.500 1.500l13 13M14.500 1.500l-13 13" stroke="#777" strokeWidth="3.400" /></svg>
          </WindowButton>
        </WindowButtons>
      </TitleBar>

      <TabRow>
        <FileTab>Datei</FileTab>
        <Tab>WebOffice</Tab>
        <Tab $active>Projekt editieren</Tab>
        <Tab>Projekt-Wizards</Tab>
        <Tab>Staging</Tab>
        <Tab>Webkarte</Tab>
        <Tab>Extras</Tab>
        <Collapse aria-label="Menüband reduzieren">
          <svg width="12" height="8" viewBox="0 0 12 8"><path d="M1 7l5-5 5 5" fill="none" stroke="#666" strokeWidth="2.600" /></svg>
        </Collapse>
      </TabRow>

      <Ribbon>
        <Group $pad={13}>
          <GroupBody>
            <LargeButton><SaveIcon size={48} />{'Projekt\nspeichern'}</LargeButton>
          </GroupBody>
          <GroupLabel>Projekt</GroupLabel>
        </Group>
        <Group $pad={12}>
          <GroupBody>
            <LargeButton><StructureIcon />{'Gesamte\nProjektstruktur'}</LargeButton>
            <ButtonRows>
              <ButtonRow>
                <SmallButton><NotebookIcon />Projekt</SmallButton>
                <SmallButton><GearsIcon />Allgemeine Einstellungen</SmallButton>
              </ButtonRow>
              <ButtonRow>
                <SmallButton><PeopleIcon />Kundeninformationen</SmallButton>
                <SmallButton><DatabaseConnIcon />Datenbankanbindungen</SmallButton>
              </ButtonRow>
              <ButtonRow>
                <SmallButton><TablesIcon />Tabellen</SmallButton>
                <SmallButton><GeoBookmarkIcon />Liste von Geo-Bookmarks</SmallButton>
              </ButtonRow>
            </ButtonRows>
          </GroupBody>
          <GroupLabel>Allgemein</GroupLabel>
        </Group>
        <Group $pad={8}>
          <GroupBody>
            <IconGrid $cols={4}>{webOfficeTools.map(([n, I]) => <IconButton key={n} name={n} icon={I} />)}</IconGrid>
          </GroupBody>
          <GroupLabel>WebOffice</GroupLabel>
        </Group>
        <Group $pad={8}>
          <GroupBody>
            <IconGrid $cols={2}>
              <IconButton name="Nordpfeil" icon={NorthIcon} />
              <IconButton name="Kartenraster" icon={MapGridIcon} />
              <IconButton name="Kartenstapel" icon={MapStackIcon} rowStart />
              <IconButton name="Kartenansicht" icon={MapEyeIcon} rowStart />
            </IconGrid>
          </GroupBody>
          <GroupLabel>Karten</GroupLabel>
        </Group>
        <Group $pad={7}>
          <GroupBody>
            <IconGrid $cols={1}>
              <IconButton name="Anheften" icon={PinIcon} />
              <IconButton name="Kartenpunkt" icon={MapPinIcon} />
              <IconButton name="Datenbanksuche" icon={DbSearchIcon} />
            </IconGrid>
          </GroupBody>
          <GroupLabel>Extern</GroupLabel>
        </Group>
        <Group $pad={8}>
          <GroupBody>
            <IconGrid $cols={2}>
              <IconButton name="Bibliothek" icon={ShelfIcon} />
              <IconButton name="Listenwerkzeug" icon={ListWrenchIcon} />
              <IconButton name="Klammern" icon={BracketsIcon} rowStart />
              <IconButton name="Zeitspanne" icon={TimeExtentIcon} rowStart />
            </IconGrid>
          </GroupBody>
          <GroupLabel>Core</GroupLabel>
        </Group>
      </Ribbon>

      <Body>
        <TreePane>
          <FilterRow onSubmit={(e) => e.preventDefault()}>
            <FilterButton aria-label="Filtern"><FunnelIcon /></FilterButton>
            <FilterInput type="text" aria-label="Filtertext" />
            <CheckLabel><CheckBox type="checkbox" defaultChecked />Unterelemente filtern</CheckLabel>
          </FilterRow>
          <PaneTitle>Projektkonfiguration</PaneTitle>
          <TreeList>
            {tree.map((n) => (
              <TreeItem key={n.name} $level={n.level}>
                <Twisty>
                  {n.state === 'open' && <svg width="10" height="10" viewBox="0 0 10 10"><path d="M9.500.5v9H.5z" fill="#555" stroke="#222" /></svg>}
                  {n.state === 'closed' && <svg width="10" height="12" viewBox="0 0 10 12"><path d="M3.500 1v9.500L8.500 5.700z" fill="#fff" stroke="#888" /></svg>}
                </Twisty>
                <TreeNode $selected={n.name === selected} onClick={() => setSelected(n.name)}>{n.name}</TreeNode>
              </TreeItem>
            ))}
          </TreeList>
        </TreePane>
        <Splitter />
        <FormPane>
          <Fields>
            {sections.map((s, i) => (
              <React.Fragment key={i}>
                {s.title && <SectionTitle>{s.title}</SectionTitle>}
                {s.rows.map((r, j) => <SettingField key={r[0]} row={r} id={`f-${i}-${j}`} />)}
              </React.Fragment>
            ))}
          </Fields>
          <ScrollBar>
            <ScrollButton aria-label="Nach oben"><Triangle up /></ScrollButton>
            <Thumb />
            <ScrollButton aria-label="Nach unten"><Triangle /></ScrollButton>
          </ScrollBar>
        </FormPane>
      </Body>
      <FootRule />

      <StatusBar>
        <StatusButton aria-label="Prüfliste" $gap={18}><ChecklistIcon /></StatusButton>
        <StatusButton aria-label="Aktualisieren" $gap={9}><RefreshIcon /></StatusButton>
        <Count $gap={16}>13</Count>
        <StatusItem $gap={18}><Dot $on /><ServerIcon /></StatusItem>
        <Count $gap={31}>17/18</Count>
        <StatusItem $gap={27}><Dot /><GlobeSearchIcon /></StatusItem>
        <StatusItem $gap={31}><Dot /><HexGlobeIcon /></StatusItem>
        <StatusItem $gap={31}><Dot /><DbUserIcon /></StatusItem>
        <StatusItem $gap={0}><Dot $on /><LogoIcon size={29} /></StatusItem>
        <Schema>Konfigurationsschema: 108.0.1</Schema>
        <StatusButton aria-label="Einstellungen" $gap={10}><GearsIcon size={15} /></StatusButton>
        <Notice>Update Author, MASTER, intern only</Notice>
      </StatusBar>
    </Window>
  );
}
